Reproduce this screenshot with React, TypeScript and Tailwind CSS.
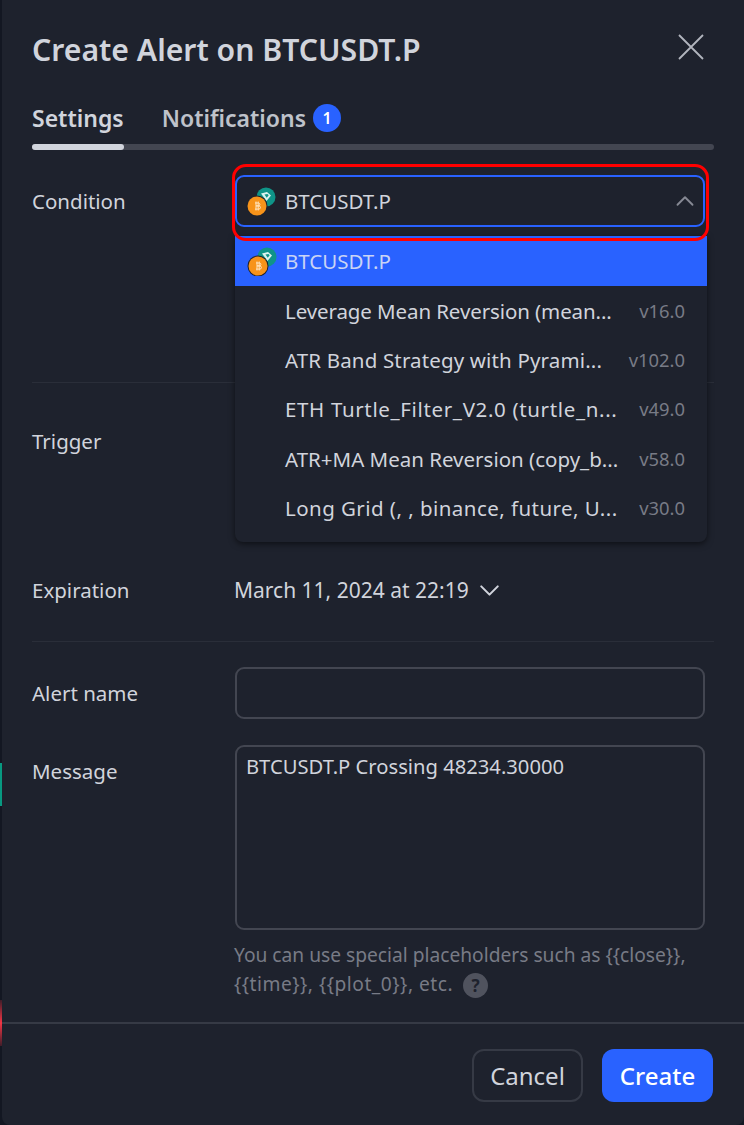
import { ChevronDown, ChevronUp } from 'lucide-react'

const scripts = [
  { name: 'Leverage Mean Reversion (mean...', version: 'v16.0', fit: 'tracking-[-0.1px]' },
  { name: 'ATR Band Strategy with Pyrami...', version: 'v102.0', fit: 'tracking-[0.15px]' },
  { name: 'ETH Turtle_Filter_V2.0 (turtle_n...', version: 'v49.0', fit: 'tracking-[0.65px]' },
  { name: 'ATR+MA Mean Reversion (copy_b...', version: 'v58.0', fit: '' },
  { name: 'Long Grid (, , binance, future, U...', version: 'v30.0', fit: 'tracking-[0.45px]' },
]

function CoinIcon() {
  return (
    <svg width="30" height="30" viewBox="0 0 30 30" className="shrink-0">
      <circle cx="20" cy="11" r="9.5" fill="#0f9488" />
      <path d="M15 7.5l6-1.5 4 3.5-4.5 5.5z" fill="#d9f2ee" />
      <path d="M18.5 8.5l3-.6 1.2 1.4-2 2.4z" fill="#0f9488" />
      <circle cx="11" cy="20" r="10.5" fill="#1e222d" />
      <circle cx="11" cy="20" r="9.5" fill="#f7931a" />
      <path d="M10 15.5v9M12.2 15.5v9M9 17h3.6c1.7 0 1.7 2.9 0 2.9H10m0 0h3c1.9 0 1.9 3.2 0 3.2H9" stroke="#ffe4bf" strokeWidth="1" fill="none" />
    </svg>
  )
}

function Row({ label, children, className = '', labelClass = '' }: { label: string; children?: React.ReactNode; className?: string; labelClass?: string }) {
  return (
    <div className={`flex ${className}`}>
      <div className={`w-[203px] shrink-0 text-[#d1d4dc] ${labelClass}`}>{label}</div>
      <div className="w-[470px]">{children}</div>
    </div>
  )
}

export default function App() {
  return (
    <div
      className="relative h-[1125px] w-[744px] overflow-hidden bg-[#131722] pl-[2px] text-[20.5px] leading-[26px] text-[#d1d4dc]"
      style={{ fontFamily: '"Noto Sans", sans-serif' }}
    >
      <div className="absolute left-0 top-[763px] h-[43px] w-[2px] bg-[#089981]" />
      <div className="absolute left-0 top-[1000px] h-[46px] w-[2px] bg-linear-to-b from-[#f23645]/20 via-[#f23645] to-[#f23645]/20" />

      <div className="flex h-full flex-col rounded-b-[8px] bg-[#1e222d]">
        <div className="flex items-start justify-between pl-[30px] pr-[40px] pt-[31px]">
          <h1 className="text-[30.2px] font-semibold leading-[38px] text-[#d1d4dc]">Create Alert on BTCUSDT.P</h1>
          <button className="mt-[3px] text-[#b2b5be]">
            <svg width="26" height="26" viewBox="0 0 26 26" className="block">
              <path d="M1 1l24 24M25 1L1 25" stroke="currentColor" strokeWidth="1.8" />
            </svg>
          </button>
        </div>

        <div className="mx-[30px] mt-[34px]">
          <div className="flex items-center gap-[38px]">
            <span className="text-[23px] font-semibold leading-[30px]">Settings</span>
            <span className="flex items-center gap-[7px] text-[23px] font-semibold leading-[30px] text-[#bfc2ca]">
              Notifications
              <span className="flex h-[28px] w-[28px] items-center justify-center rounded-full bg-[#2962ff] text-[16px] font-semibold text-white">
                1
              </span>
            </span>
          </div>
          <div className="mt-[11px] h-[6px] rounded-full bg-[#434651]">
            <div className="h-full w-[92px] rounded-full bg-[#d1d4dc]" />
          </div>
        </div>

        <div className="relative mx-[30px] mt-[25px]">
          <Row label="Condition" className="h-[207px] items-start" labelClass="pt-[13px]">
            <div className="flex h-[52px] items-center rounded-[9px] border-2 border-[#2962ff] pl-[9px] pr-[3px]">
              <CoinIcon />
              <span className="ml-[9px] flex-1">BTCUSDT.P</span>
              <ChevronUp size={30} strokeWidth={1.5} className="text-[#868993]" />
            </div>
          </Row>

          <div className="h-px bg-[#2a2e39]" />
          <Row label="Trigger" className="h-[182px] pt-[45px]" />
          <Row label="Expiration" className="h-[50px] items-center">
            <div className="-ml-px flex items-center gap-[4px] text-[21px]">
              March 11, 2024 at 22:19
              <ChevronDown size={33} strokeWidth={1.5} />
            </div>
          </Row>

          {/* dropdown list opened over the form */}
          <div className="absolute left-[203px] top-[61px] w-[472px] rounded-b-[8px] bg-[#1e222d] pb-[9px] shadow-[0_2px_6px_rgba(0,0,0,0.55)]">
            <div className="flex h-[50px] items-center bg-[#2962ff] pl-[12px] text-[#c9d4f5]">
              <CoinIcon />
              <span className="ml-[8px]">BTCUSDT.P</span>
            </div>
            {scripts.map(s => (
              <div key={s.version} className="flex h-[49.4px] items-center justify-between pl-[50px] pr-[22px]">
                <span className={`whitespace-nowrap ${s.fit}`}>{s.name}</span>
                <span className="text-[18.4px] text-[#787b86]">{s.version}</span>
              </div>
            ))}
          </div>

          {/* red annotation around the select */}
          <div className="pointer-events-none absolute left-[200px] top-[-11px] h-[77px] w-[477px] rounded-[14px] border-[3px] border-[#ff0000]" />
        </div>

        <div className="mx-[30px] mt-[26px] h-px bg-[#2a2e39]" />

        <div className="mx-[30px] mt-[25px]">
          <Row label="Alert name" className="items-center">
            <div className="h-[52px] rounded-[9px] border-2 border-[#434651]" />
          </Row>
          <Row label="Message" className="mt-[26px]" labelClass="pt-[13px]">
            <div className="h-[185px] rounded-[9px] border-2 border-[#434651] px-[9px] py-[6px] text-[20.2px]">
              BTCUSDT.P Crossing 48234.30000
            </div>
            <p className="-ml-px mt-[10px] text-[19.2px] leading-[29px] text-[#787b86]">
              You can use special placeholders such as {'{{close}}'},{' '}
              <span className="tracking-[0.5px]">{'{{time}}'}, {'{{plot_0}}'}, etc.</span>
              <span className="ml-[10px] inline-flex h-[25px] w-[25px] items-center justify-center rounded-full bg-[#50535e] align-middle text-[17px] font-bold leading-none text-[#1e222d]">
                ?
              </span>
            </p>
          </Row>
        </div>

        <div className="mt-[24px] h-[2px] bg-[#363a45]" />

        <div className="flex justify-end gap-[19px] pr-[31px] pt-[25px]">
          <button className="h-[53px] w-[111px] rounded-[12px] border-2 border-[#363a45] text-[24px]">Cancel</button>
          <button className="h-[53px] w-[111px] rounded-[12px] bg-[#2962ff] text-[24px] font-medium text-white">Create</button>
        </div>
      </div>
    </div>
  )
}
